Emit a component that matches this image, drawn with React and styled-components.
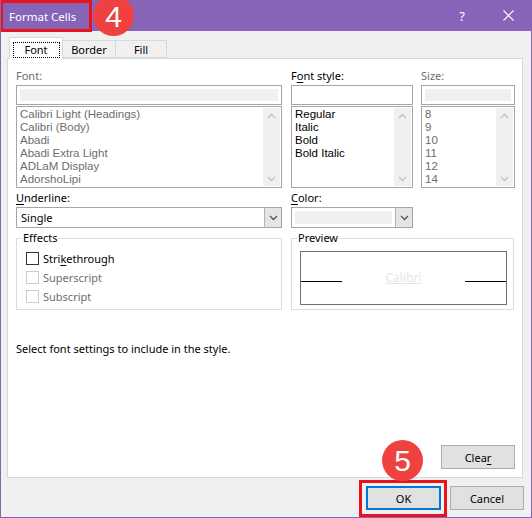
import React from 'react';
import styled, { createGlobalStyle } from 'styled-components';

const FONT = `"Noto Sans", "Open Sans", sans-serif`;
const LIST_FONT = `"Liberation Sans", Arial, sans-serif`;
const SIZE = '11px';

const Global = createGlobalStyle`
  html, body { margin: 0; padding: 0; background: #f0f0f0; }
  body { font-family: ${FONT}; font-size: ${SIZE}; }
  * { box-sizing: border-box; }
`;

const Window = styled.div`
  position: relative;
  width: 532px;
  height: 518px;
  border: 1px solid #8764b8;
  border-top: none;
  background: #f0f0f0;
  display: flex;
  flex-direction: column;
  font-family: ${FONT};
  font-size: ${SIZE};
  color: #000;
  overflow: hidden;
`;

const TitleBar = styled.div`
  height: 31px;
  background: #8764b8;
  display: flex;
  align-items: center;
  padding-left: 8px;
  color: #fff;
  font-size: 11.5px;
`;

const Title = styled.div`
  flex: 1;
  padding-top: 1px;
`;

const TitleButton = styled.div`
  width: 46px;
  height: 31px;
  display: flex;
  align-items: center;
  justify-content: center;
  color: #fff;
  font-size: 13px;
`;

const Body = styled.div`
  flex: 1;
  display: flex;
  flex-direction: column;
  padding: 6px 7px 0 6px;
`;

const TabRow = styled.div`
  display: flex;
  align-items: flex-end;
  height: 22px;
  margin-left: 2px;
  margin-bottom: -1px;
  position: relative;
  z-index: 1;
`;

const Tab = styled.div`
  width: ${(p) => p.$w}px;
  height: ${(p) => (p.$active ? 22 : 18)}px;
  margin-bottom: ${(p) => (p.$active ? 0 : 1)}px;
  background: ${(p) => (p.$active ? '#fff' : '#f0f0f0')};
  border: 1px solid #d9d9d9;
  border-bottom: ${(p) => (p.$active ? 'none' : '1px solid #d9d9d9')};
  border-left: ${(p) => (p.$first ? '1px solid #d9d9d9' : 'none')};
  display: flex;
  align-items: center;
  justify-content: center;
  padding-top: ${(p) => (p.$active ? 2 : 0)}px;
`;

const Focus = styled.span`
  border: 1px dotted #000;
  width: 47px;
  height: 16px;
  display: flex;
  align-items: center;
  justify-content: center;
`;

const Panel = styled.div`
  width: 516px;
  height: 420px;
  background: #fff;
  border: 1px solid #d9d9d9;
  display: flex;
  flex-direction: column;
  padding: 9px 8px 8px 8px;
`;

const Grid = styled.div`
  display: grid;
  grid-template-columns: 266px 122px 93px;
  column-gap: 9px;
`;

const Col = styled.div`
  display: flex;
  flex-direction: column;
  margin-left: ${(p) => p.$ml || 0}px;
`;

const Label = styled.div`
  height: 16px;
  line-height: 16px;
  margin-bottom: 1px;
  color: ${(p) => (p.$disabled ? '#6d6d6d' : '#000')};
`;

const U = styled.span`
  text-decoration: underline;
  text-underline-offset: 2px;
`;

const TextBox = styled.div`
  height: 20px;
  border: 1px solid #a5a5a5;
  background: #fff;
  padding: 3px;
  display: flex;
`;

const Fill = styled.div`
  flex: 1;
  background: #f0f0f0;
`;

const ListBox = styled.div`
  height: 82px;
  margin-top: 1px;
  border: 1px solid #a5a5a5;
  background: #fff;
  display: flex;
`;

const Items = styled.div`
  flex: 1;
  padding: 1px 0 0 3px;
  display: flex;
  flex-direction: column;
  overflow: hidden;
  font-family: ${LIST_FONT};
  font-size: 11.5px;
`;

const Item = styled.div`
  height: 13px;
  line-height: 13px;
  color: ${(p) => (p.$disabled ? '#6d6d6d' : '#000')};
  white-space: nowrap;
`;

const ScrollBar = styled.div`
  width: 17px;
  background: #f0f0f0;
  display: flex;
  flex-direction: column;
  justify-content: space-between;
  align-items: center;
  padding: 5px 0 4px;
  margin: 1px 1px 1px 0;
`;

const Select = styled.div`
  height: 21px;
  border: 1px solid #a5a5a5;
  background: #fff;
  display: flex;
  align-items: stretch;
`;

const SelectValue = styled.div`
  flex: 1;
  display: flex;
  align-items: center;
  padding: 0 4px;
`;

const SelectFill = styled.div`
  flex: 1;
  margin: 3px;
  background: #f0f0f0;
`;

const DropButton = styled.div`
  width: 17px;
  background: #e5e5e5;
  border-left: 1px solid #b4b4b4;
  display: flex;
  align-items: center;
  justify-content: center;
`;

const Row2 = styled(Grid)`
  margin-top: 2px;
`;

const Row3 = styled.div`
  display: grid;
  grid-template-columns: 266px 223px;
  column-gap: 9px;
  margin-top: 2px;
`;

const Group = styled.fieldset`
  margin: 0;
  padding: 3px 0 0 0;
  border: 1px solid #dcdcdc;
  height: 80px;
  min-width: 0;
`;

const Legend = styled.legend`
  margin-left: 5px;
  padding: 0 1px;
  line-height: 16px;
  height: 16px;
`;

const CheckRow = styled.div`
  display: flex;
  align-items: center;
  height: 19px;
  padding-left: 9px;
  color: ${(p) => (p.$disabled ? '#6d6d6d' : '#000')};
`;

const Box = styled.span`
  width: 13px;
  height: 13px;
  border: 1px solid ${(p) => (p.$disabled ? '#cccccc' : '#333333')};
  background: #fff;
  margin-right: 4px;
`;

const PreviewBox = styled.div`
  margin: 2px 6px 0 8px;
  height: 54px;
  border: 1px solid #707070;
  display: flex;
  align-items: center;
  justify-content: space-between;
`;

const Line = styled.div`
  width: 41px;
  height: 1px;
  background: #000;
  margin-top: 6px;
`;

const Sample = styled.div`
  color: #e6e6e6;
  text-decoration: underline;
  font-size: 12px;
  margin-top: -2px;
`;

const Description = styled.div`
  margin-top: 31px;
  line-height: 16px;
`;

const Button = styled.button`
  font-family: ${FONT};
  font-size: ${SIZE};
  color: #000;
  width: ${(p) => p.$w || 75}px;
  height: ${(p) => p.$h || 23}px;
  background: #e1e1e1;
  border: ${(p) => (p.$default ? '2px solid #0078d7' : '1px solid #adadad')};
  padding: 0;
  display: flex;
  align-items: center;
  justify-content: center;
`;

const ClearButton = styled(Button)`
  margin-top: auto;
  align-self: flex-end;
  margin-right: -1px;
`;

const Footer = styled.div`
  display: flex;
  justify-content: flex-end;
  gap: 9px;
  padding-top: 8px;
`;

const RedFrame = styled.div`
  position: absolute;
  left: ${(p) => p.$x}px;
  top: ${(p) => p.$y}px;
  width: ${(p) => p.$w}px;
  height: ${(p) => p.$h}px;
  border: 3px solid #e8141c;
  pointer-events: none;
`;

const Badge = styled.div`
  position: absolute;
  left: ${(p) => p.$x}px;
  top: ${(p) => p.$y}px;
  width: 41px;
  height: 41px;
  border-radius: 50%;
  background: #f04141;
  color: #fff;
  font-family: "Liberation Sans", Arial, sans-serif;
  font-size: 30px;
  display: flex;
  align-items: center;
  justify-content: center;
  line-height: 1;
  padding-top: ${(p) => p.$pt || 0}px;
`;

const Chevron = ({ up, color = '#c2c2c2' }) => (
  <svg width="9" height="6" viewBox="0 0 9 6">
    <path
      d={up ? 'M1 5 L4.5 1.5 L8 5' : 'M1 1 L4.5 4.5 L8 1'}
      fill="none"
      stroke={color}
      strokeWidth="1.3"
    />
  </svg>
);

const List = ({ items, disabled }) => (
  <ListBox>
    <Items>
      {items.map((t) => (
        <Item key={t} $disabled={disabled}>
          {t}
        </Item>
      ))}
    </Items>
    <ScrollBar>
      <Chevron up />
      <Chevron />
    </ScrollBar>
  </ListBox>
);

export default function App() {
  return (
    <>
      <Global />
      <Window>
        <TitleBar>
          <Title>Format Cells</Title>
          <TitleButton>?</TitleButton>
          <TitleButton>
            <svg width="11" height="11" viewBox="0 0 11 11">
              <path d="M0.5 0.5 L10.5 10.5 M10.5 0.5 L0.5 10.5" stroke="#fff" strokeWidth="1.1" />
            </svg>
          </TitleButton>
        </TitleBar>
        <Body>
          <TabRow>
            <Tab $active $first $w={54}>
              <Focus>Font</Focus>
            </Tab>
            <Tab $w={53}>Border</Tab>
            <Tab $w={51}>Fill</Tab>
          </TabRow>
          <Panel>
            <Grid>
              <Col>
                <Label $disabled>Font:</Label>
                <TextBox>
                  <Fill />
                </TextBox>
                <List
                  disabled
                  items={[
                    'Calibri Light (Headings)',
                    'Calibri (Body)',
                    'Abadi',
                    'Abadi Extra Light',
                    'ADLaM Display',
                    'AdorshoLipi',
                  ]}
                />
              </Col>
              <Col>
                <Label>
                  F<U>o</U>nt style:
                </Label>
                <TextBox />
                <List items={['Regular', 'Italic', 'Bold', 'Bold Italic']} />
              </Col>
              <Col $ml={-1}>
                <Label $disabled>Size:</Label>
                <TextBox>
                  <Fill />
                </TextBox>
                <List disabled items={['8', '9', '10', '11', '12', '14']} />
              </Col>
            </Grid>
            <Row2>
              <Col>
                <Label>
                  <U>U</U>nderline:
                </Label>
                <Select>
                  <SelectValue>Single</SelectValue>
                  <DropButton>
                    <Chevron color="#555" />
                  </DropButton>
                </Select>
              </Col>
              <Col>
                <Label>
                  <U>C</U>olor:
                </Label>
                <Select>
                  <SelectFill />
                  <DropButton>
                    <Chevron color="#555" />
                  </DropButton>
                </Select>
              </Col>
            </Row2>
            <Row3>
              <Group>
                <Legend>Effects</Legend>
                <CheckRow>
                  <Box />
                  <span>
                    Stri<U>k</U>ethrough
                  </span>
                </CheckRow>
                <CheckRow $disabled>
                  <Box $disabled />
                  <span>Superscript</span>
                </CheckRow>
                <CheckRow $disabled>
                  <Box $disabled />
                  <span>Subscript</span>
                </CheckRow>
              </Group>
              <Group>
                <Legend>Preview</Legend>
                <PreviewBox>
                  <Line />
                  <Sample>Calibri</Sample>
                  <Line />
                </PreviewBox>
              </Group>
            </Row3>
            <Description>Select font settings to include in the style.</Description>
            <ClearButton $w={74} $h={24}>
              Clea<U>r</U>
            </ClearButton>
          </Panel>
          <Footer>
            <Button $default $w={75} $h={24}>
              OK
            </Button>
            <Button $w={74} $h={24}>
              Cancel
            </Button>
          </Footer>
        </Body>
        <RedFrame $x={-1} $y={0} $w={92} $h={32} />
        <Badge $x={92} $y={-5} $pt={3}>4</Badge>
        <RedFrame $x={358} $y={480} $w={88} $h={37} />
        <Badge $x={381} $y={440} $pt={1}>5</Badge>
      </Window>
    </>
  );
}
